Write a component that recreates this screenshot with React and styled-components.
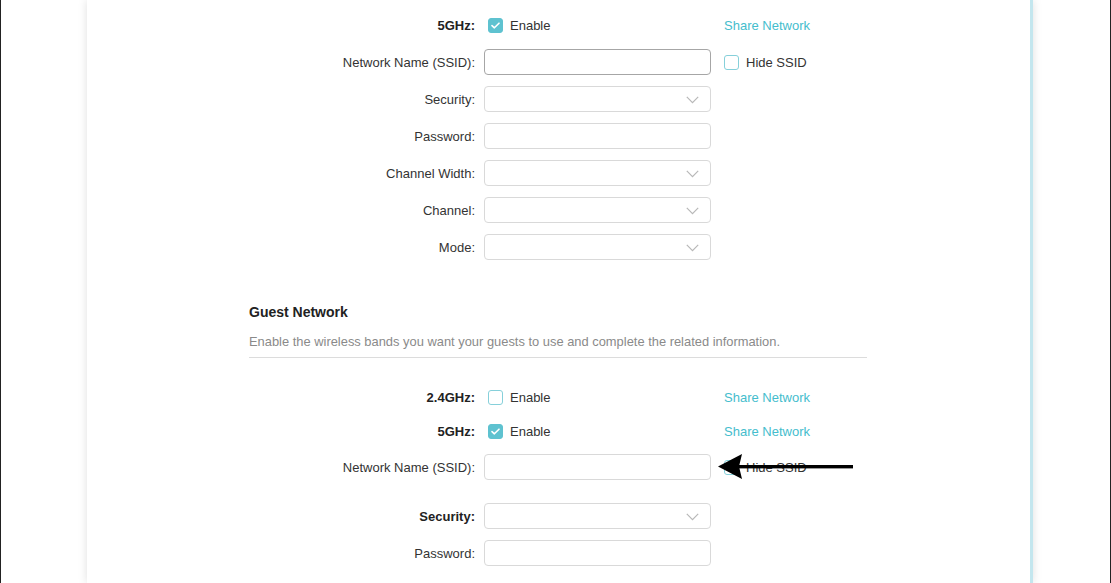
import React from 'react'
import styled, { createGlobalStyle } from 'styled-components'

const Global = createGlobalStyle`
  html, body {
    margin: 0;
    padding: 0;
    background: #fff;
  }
  body {
    font-family: "Liberation Sans", Arial, Helvetica, sans-serif;
  }
`

function Checkbox({ checked }) {
  return (
    <Box $checked={checked}>
      {checked && (
        <svg width="9" height="7" viewBox="0 0 9 7">
          <polyline points="1,3.6 3.4,5.8 8,1.2" fill="none" stroke="#fff" strokeWidth="1.6" strokeLinecap="round" strokeLinejoin="round" />
        </svg>
      )}
    </Box>
  )
}

function Select() {
  return (
    <Field as="div">
      <Chevron width="13" height="8" viewBox="0 0 13 8">
        <polyline points="0.8,0.8 6.5,6.6 12.2,0.8" fill="none" stroke="#b8b8b8" strokeWidth="1.2" />
      </Chevron>
    </Field>
  )
}

function Arrow() {
  return (
    <ArrowMark width="136" height="27" viewBox="0 0 136 27">
      <polygon points="0,13.5 24,1 21,13.5 24,26" fill="#000" />
      <rect x="20" y="12" width="115" height="3.4" fill="#000" />
    </ArrowMark>
  )
}

function App() {
  return (
    <>
      <Global />
      <Frame>
        <Panel>
          <Row $top={13}>
            <Label $bold>5GHz:</Label>
            <CheckLine><Checkbox checked /><span>Enable</span></CheckLine>
            <ShareLink>Share Network</ShareLink>
          </Row>
          <Row $top={11}>
            <Label>Network Name (SSID):</Label>
            <Field $focus />
            <CheckLine><Checkbox /><span>Hide SSID</span></CheckLine>
          </Row>
          <Row>
            <Label>Security:</Label>
            <Select />
          </Row>
          <Row>
            <Label>Password:</Label>
            <Field />
          </Row>
          <Row>
            <Label>Channel Width:</Label>
            <Select />
          </Row>
          <Row>
            <Label>Channel:</Label>
            <Select />
          </Row>
          <Row>
            <Label>Mode:</Label>
            <Select />
          </Row>

          <SectionTitle>Guest Network</SectionTitle>
          <SectionNote>Enable the wireless bands you want your guests to use and complete the related information.</SectionNote>

          <Row $top={27}>
            <Label $bold>2.4GHz:</Label>
            <CheckLine><Checkbox /><span>Enable</span></CheckLine>
            <ShareLink>Share Network</ShareLink>
          </Row>
          <Row $top={9}>
            <Label $bold>5GHz:</Label>
            <CheckLine><Checkbox checked /><span>Enable</span></CheckLine>
            <ShareLink>Share Network</ShareLink>
          </Row>
          <Row $top={10}>
            <Label>Network Name (SSID):</Label>
            <Field />
            <CheckLine><Checkbox /><span>Hide SSID</span></CheckLine>
            <Arrow />
          </Row>
          <Row $top={24}>
            <Label $bold>Security:</Label>
            <Select />
          </Row>
          <Row>
            <Label>Password:</Label>
            <Field />
          </Row>
        </Panel>
      </Frame>
    </>
  )
}

export default App


const Frame = styled.div`
  box-sizing: border-box;
  width: 1111px;
  height: 583px;
  overflow: hidden;
  border-left: 1px solid #222;
  border-right: 1px solid #222;
  padding-left: 86px;
  display: flex;
`

const Panel = styled.div`
  box-sizing: border-box;
  width: 946px;
  height: 100%;
  background: #fff;
  border-right: 3px solid #c3e6ee;
  box-shadow: 0 0 9px rgba(0, 0, 0, 0.13);
  padding-left: 162px;
`

const Row = styled.div`
  position: relative;
  display: grid;
  grid-template-columns: 226px 227px auto;
  column-gap: 9px;
  align-items: center;
  height: 25px;
  margin-top: ${p => (p.$top ?? 12)}px;
  font-size: 13px;
  color: #333;
`

const Label = styled.div`
  text-align: right;
  font-weight: ${p => (p.$bold ? 700 : 400)};
  color: ${p => (p.$bold ? '#222' : '#333')};
`

const Field = styled.input`
  box-sizing: border-box;
  position: relative;
  width: 227px;
  height: 26px;
  margin: 0;
  border: 1px solid ${p => (p.$focus ? '#a6a6a6' : '#d9d9d9')};
  border-radius: 4px;
  background: #fff;
  outline: none;
`

const Chevron = styled.svg`
  position: absolute;
  right: 11px;
  top: 9px;
`

const CheckLine = styled.label`
  display: flex;
  align-items: center;
  gap: 7px;
  margin-left: 4px;
  color: #333;
`

const Box = styled.span`
  box-sizing: border-box;
  width: 15px;
  height: 15px;
  border-radius: 3px;
  display: flex;
  align-items: center;
  justify-content: center;
  background: ${p => (p.$checked ? '#5ec2d0' : '#fff')};
  border: 1px solid ${p => (p.$checked ? '#5ec2d0' : '#86d0da')};
`

const ShareLink = styled.span`
  margin-left: 4px;
  color: #45bdcd;
`

const SectionTitle = styled.h3`
  margin: 43px 0 0;
  font-size: 14px;
  line-height: 20px;
  font-weight: 700;
  color: #222;
`

const SectionNote = styled.p`
  width: 618px;
  margin: 11px 0 0;
  padding-bottom: 6px;
  font-size: 12.9px;
  line-height: 18px;
  color: #8a8a8a;
  border-bottom: 1px solid #dcdcdc;
`

const ArrowMark = styled.svg`
  position: absolute;
  left: 469px;
  top: -1px;
`
